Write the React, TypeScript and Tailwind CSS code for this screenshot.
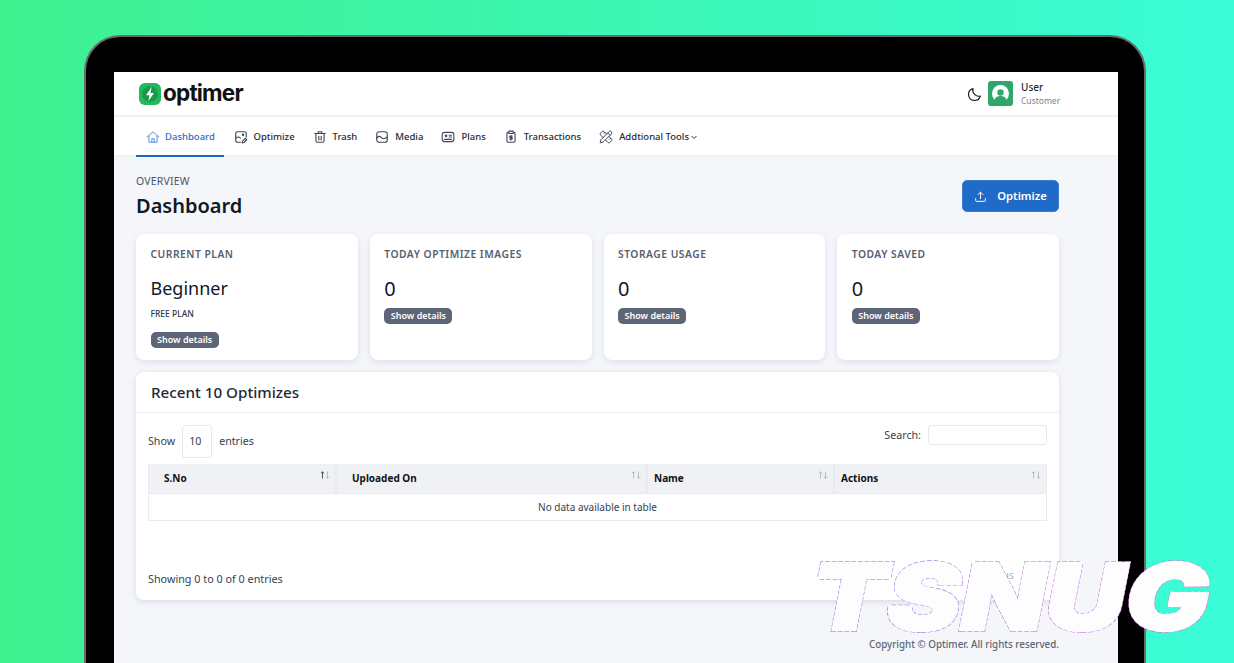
import React from "react";
import { PencilRuler } from "lucide-react";

const FONT = "font-['Noto_Sans','Open_Sans',sans-serif]";

const HomeIcon = () => (
  <svg width="14" height="14" viewBox="0 0 24 24" fill="none" stroke="#5b8fd6" strokeWidth="1.7" strokeLinecap="round" strokeLinejoin="round">
    <path d="M2 12 12 3l10 9" />
    <path d="M5 10v11h14V10" />
    <path d="M10 21v-6h4v6" />
  </svg>
);

const ImageEditIcon = () => (
  <svg width="14" height="14" viewBox="0 0 24 24" fill="none" stroke="#3f4654" strokeWidth="1.9" strokeLinecap="round" strokeLinejoin="round">
    <path d="M11 21H6a3 3 0 0 1-3-3V6a3 3 0 0 1 3-3h12a3 3 0 0 1 3 3v6" />
    <path d="M3 14c3-3 5-3 8 0" />
    <circle cx="15.500" cy="8" r="1.200" />
    <path d="m14 22 .6-3 4.700-4.700 2.400 2.400L17 21.400z" />
  </svg>
);

const TrashIcon = () => (
  <svg width="14" height="14" viewBox="0 0 24 24" fill="none" stroke="#3f4654" strokeWidth="1.9" strokeLinecap="round" strokeLinejoin="round">
    <path d="M3 6h18" />
    <path d="M9 6V3h6v3" />
    <path d="M5 6v13a2 2 0 0 0 2 2h10a2 2 0 0 0 2-2V6" />
    <path d="M10 11v6M14 11v6" />
  </svg>
);

const MediaIcon = () => (
  <svg width="14" height="14" viewBox="0 0 24 24" fill="none" stroke="#3f4654" strokeWidth="1.9" strokeLinecap="round" strokeLinejoin="round">
    <rect x="3" y="3" width="18" height="18" rx="4" />
    <path d="M3 14c3-4 5-4 8-1s5 3 10-1" />
  </svg>
);

const PlansIcon = () => (
  <svg width="14" height="14" viewBox="0 0 24 24" fill="none" stroke="#3f4654" strokeWidth="1.9" strokeLinecap="round" strokeLinejoin="round">
    <rect x="2" y="4" width="20" height="16" rx="4" />
    <circle cx="8.500" cy="10" r="1.500" />
    <path d="M14 9h4M14 12h4M6 16h12" />
  </svg>
);

const TransactionsIcon = () => (
  <svg width="14" height="14" viewBox="0 0 24 24" fill="none" stroke="#3f4654" strokeWidth="1.900" strokeLinecap="round" strokeLinejoin="round">
    <path d="M8 4H7a2 2 0 0 0-2 2v13a2 2 0 0 0 2 2h10a2 2 0 0 0 2-2V6a2 2 0 0 0-2-2h-1" />
    <rect x="8" y="2" width="8" height="4" rx="1" />
    <path d="M14 10.500h-3a1.200 1.200 0 0 0 0 2.600h2a1.200 1.200 0 0 1 0 2.600h-3M12 9.500V17" />
  </svg>
);

const SortIcon = ({ active }: { active?: boolean }) => (
  <svg className="absolute right-[5px] top-[7px]" width="10" height="8" viewBox="0 0 10 8" fill="none" strokeWidth="1">
    <path d="M2.500 7.500V.8M.9 2.400 2.500.8l1.600 1.600" stroke={active ? "#4b5563" : "#b9bcc3"} />
    <path d="M7.500.5v6.700M5.900 5.600l1.600 1.600 1.600-1.600" stroke="#b9bcc3" />
  </svg>
);

const navItems = [
  { label: "Optimize", icon: <ImageEditIcon /> },
  { label: "Trash", icon: <TrashIcon /> },
  { label: "Media", icon: <MediaIcon /> },
  { label: "Plans", icon: <PlansIcon /> },
  { label: "Transactions", icon: <TransactionsIcon /> },
];

const ShowDetails = ({ className }: { className: string }) => (
  <span className={`${className} flex w-fit items-center h-[16px] px-[6.500px] rounded-[5px] bg-[#5e6576] text-white text-[9px] font-semibold`}>
    Show details
  </span>
);

const StatCard = ({ title, value, sub }: { title: string; value: string; sub?: string }) => (
  <div className="bg-white rounded-lg shadow-[0_2px_6px_rgba(60,70,90,0.12)] pl-[14.500px] pt-[13px] h-[126px]">
    <div className="text-[10.300px] font-semibold tracking-[0.5px] leading-[15px] text-[#566072]">{title}</div>
    {sub ? (
      <>
        <div className="text-[18px] leading-[26px] text-[#111827] mt-[13px]">{value}</div>
        <div className="text-[8.500px] font-medium leading-[12px] text-[#2d3648] mt-[7px]">{sub}</div>
        <ShowDetails className="mt-[12px]" />
      </>
    ) : (
      <>
        <div className="text-[20px] leading-[28px] text-[#111827] mt-[13px]">{value}</div>
        <ShowDetails className="mt-[5px]" />
      </>
    )}
  </div>
);

const columns = [
  { label: "S.No", width: "w-[188px]", pad: "pl-[15px]", active: true },
  { label: "Uploaded On", width: "w-[311px]", pad: "pl-[15px]" },
  { label: "Name", width: "w-[187px]", pad: "pl-[6px]" },
  { label: "Actions", width: "flex-1", pad: "pl-[6px]" },
];

export default function App() {
  return (
    <div className={`${FONT} relative w-[1234px] h-[663px] overflow-hidden bg-gradient-to-r from-[#3ff08e] to-[#3afcd6]`}>
      <div className="ml-[84px] translate-y-[35px] w-[1062px] h-[628px] rounded-t-[36px] bg-black border-2 border-b-0 border-[#6b6b6b] pt-[35px] pl-[28px] pr-[26px]">
        <div className="h-[591px] bg-[#f4f6fa] flex flex-col">
          <header className="bg-white h-[45px] border-b-2 border-[#f1f2f5] flex items-center pl-[25px] pr-[59px]">
            <div className="w-[22px] h-[22px] rounded-[6px] bg-[#22b85c] flex items-center justify-center">
              <svg width="16" height="18" viewBox="0 0 14 16"><circle cx="7" cy="8" r="7" fill="#179a4b" /><path d="M8.500 1.500 3.500 9h3L5.500 14.500l5-7.500h-3z" fill="#fff" /></svg>
            </div>
            <span className="ml-[2px] text-[22.500px] font-bold tracking-[-0.8px] text-[#111] font-['Inter',sans-serif] leading-none">optimer</span>
            <svg className="ml-auto" width="16" height="16" viewBox="0 0 24 24" fill="none" stroke="#222" strokeWidth="1.800" strokeLinejoin="round"><path d="M20 15A9 9 0 0 1 9 4a9 9 0 1 0 11 11z" /></svg>
            <div className="ml-[5px] w-[25px] h-[25px] rounded-[3px] bg-[#2ea86a] flex items-center justify-center overflow-hidden">
              <svg width="19" height="19" viewBox="0 0 19 19"><circle cx="9.500" cy="9.500" r="8.500" fill="#fff" /><circle cx="9.500" cy="8.500" r="3.200" fill="#2ea86a" /><path d="M3.500 16c.6-2.700 2.600-4 6-4s5.400 1.300 6 4l-1 3h-10z" fill="#2ea86a" /></svg>
            </div>
            <div className="ml-[8px] w-[38px]">
              <div className="text-[10px] font-medium text-[#1f2937] leading-[14px]">User</div>
              <div className="text-[8.500px] text-[#7a8291] leading-[13px]">Customer</div>
            </div>
          </header>
          <nav className="bg-white h-[40px] border-b-2 border-[#f1f2f5] flex items-stretch pl-[22px] text-[9.500px] font-medium text-[#1f2937]">
            <div className="w-[88px] flex items-center gap-[5px] pl-[10px] pt-[2px] border-b-2 border-[#1e69c7] -mb-[2px] text-[#2e6cc4]">
              <HomeIcon />
              Dashboard
            </div>
            {navItems.map((item) => (
              <div key={item.label} className="flex items-center gap-[6px] pt-[2px] ml-[9.500px] mr-[8.500px]">
                {item.icon}
                {item.label}
              </div>
            ))}
            <div className="flex items-center gap-[6px] pt-[2px] ml-[9.500px]">
              <PencilRuler size={14} strokeWidth={1.7} color="#3f4654" />
              Addtional Tools
              <svg className="-ml-[5px]" width="8" height="8" viewBox="0 0 8 8" fill="none" stroke="#333" strokeWidth="1"><path d="m1.500 3 2.500 2.500L6.500 3" /></svg>
            </div>
          </nav>
          <main className="flex-1 pl-[22px] pr-[59px]">
            <div className="flex items-start justify-between pt-[17px] h-[77px]">
              <div>
                <div className="text-[10.500px] text-[#4b5563] tracking-[0.2px] leading-[15px]">OVERVIEW</div>
                <div className="text-[20px] font-semibold text-[#111827] leading-[28px] mt-[3px]">Dashboard</div>
              </div>
              <div className="mt-[6px] w-[97px] h-[32px] rounded-[5px] bg-[#1f6bc7] border border-[#3a7fd4] text-white text-[11.200px] font-semibold flex items-center justify-center gap-[10px]">
                <svg width="13" height="13" viewBox="0 0 24 24" fill="none" stroke="#fff" strokeWidth="1.800" strokeLinecap="round" strokeLinejoin="round"><path d="M12 16V4M7.500 8.500 12 4l4.500 4.500M3 16v3a2 2 0 0 0 2 2h14a2 2 0 0 0 2-2v-3" /></svg>
                Optimize
              </div>
            </div>
            <div className="grid grid-cols-4 gap-[12px]">
              <StatCard title="CURRENT PLAN" value="Beginner" sub="FREE PLAN" />
              <StatCard title="TODAY OPTIMIZE IMAGES" value="0" />
              <StatCard title="STORAGE USAGE" value="0" />
              <StatCard title="TODAY SAVED" value="0" />
            </div>
            <section className="mt-[12px] h-[228px] bg-white rounded-lg shadow-[0_2px_6px_rgba(60,70,90,0.14)]">
              <div className="h-[41px] border-b border-[#eceef2] pl-[15px] flex items-center text-[15.200px] font-medium text-[#1f2937]">
                Recent 10 Optimizes
              </div>
              <div className="px-[12px]">
                <div className="flex items-start justify-between pt-[12px] h-[51px] text-[10.700px] text-[#374151]">
                  <div className="flex items-center">
                    Show
                    <span className="mx-[7px] w-[30px] h-[33px] border border-[#e6e8ec] rounded-[3px] flex items-center pl-[6px]">10</span>
                    entries
                  </div>
                  <div className="flex items-center h-[20px] leading-[14px]">
                    <span className="-mt-[1px]">Search:</span>
                    <span className="ml-[7px] w-[119px] h-[20px] border border-[#e6e8ec] rounded-[3px]" />
                  </div>
                </div>
                <div className="border border-t-0 border-[#e9ebef]">
                  <div className="flex h-[30px] bg-[#f0f1f5] border-b border-[#e6e8ec] text-[10px] font-bold text-[#111]">
                    {columns.map((c) => (
                      <div key={c.label} className={`${c.width} ${c.pad} relative flex items-center border-r-2 border-[#e9ebef] last:border-r-0`}>
                        {c.label}
                        <SortIcon active={c.active} />
                      </div>
                    ))}
                  </div>
                  <div className="h-[26px] flex items-center justify-center text-[10px] text-[#374151]">No data available in table</div>
                </div>
                <div className="flex justify-between mt-[50px] text-[10.800px] text-[#374151]">
                  <span>Showing 0 to 0 of 0 entries</span>
                  <span className="text-[#b0b4bb] mr-[33px] -mt-[4px]">Previous</span>
                </div>
              </div>
            </section>
            <div className="text-right text-[9.800px] font-medium text-[#5f6675] mt-[38px]">Copyright © Optimer. All rights reserved.</div>
          </main>
        </div>
      </div>
      <svg className="absolute left-[806px] top-[550px]" width="420" height="90" viewBox="0 0 420 90">
        <defs>
          <linearGradient id="wm" x1="0" y1="0" x2="1" y2="0">
            <stop offset="0" stopColor="#6a6ae8" />
            <stop offset="0.5" stopColor="#b45be0" />
            <stop offset="1" stopColor="#e05bd8" />
          </linearGradient>
        </defs>
        <text x="5" y="80" fontFamily="Inter, sans-serif" fontWeight="900" fontStyle="italic" fontSize="92" textLength="398" lengthAdjust="spacingAndGlyphs" fill="#fdfdfe" stroke="url(#wm)" strokeWidth="3.500" strokeDasharray="4 1.500" aria-hidden="true">
          TSNUG
        </text>
        <text x="5" y="80" fontFamily="Inter, sans-serif" fontWeight="900" fontStyle="italic" fontSize="92" textLength="398" lengthAdjust="spacingAndGlyphs" fill="#fdfdfe" stroke="#fdfdfe" strokeWidth="2.700">
          TSNUG
        </text>
      </svg>
    </div>
  );
}
